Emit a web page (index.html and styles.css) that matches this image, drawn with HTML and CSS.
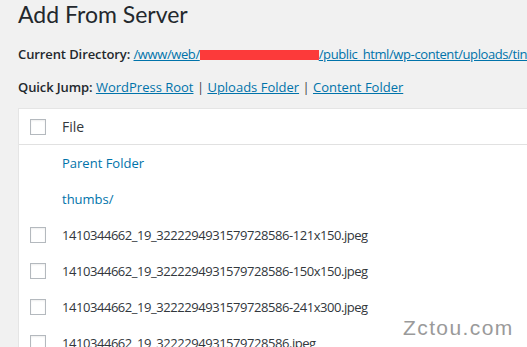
FILE: index.html
```html
<!DOCTYPE html>
<html lang="en">
<head>
    <meta charset="UTF-8">
    <title>Add From Server</title>
    <link rel="stylesheet" href="styles.css">
</head>
<body>
    <div class="wrap">
        <h1>Add From Server</h1>
        <p class="path-line"><strong>Current Directory:</strong> <a class="path" href="#">/www/web/<span class="redact"></span>/public_html/wp-content/uploads/tinymce</a></p>
        <p class="jump-line"><strong>Quick Jump:</strong> <a href="#">WordPress Root</a> | <a href="#">Uploads Folder</a> | <a href="#">Content Folder</a></p>

        <div class="files">
            <div class="row head">
                <span class="check"></span>
                <span class="name">File</span>
            </div>
            <div class="row">
                <span class="check blank"></span>
                <a class="name" href="#">Parent Folder</a>
            </div>
            <div class="row">
                <span class="check blank"></span>
                <a class="name" href="#">thumbs/</a>
            </div>
            <div class="row">
                <span class="check"></span>
                <span class="name file">1410344662_19_3222294931579728586-121x150.jpeg</span>
            </div>
            <div class="row">
                <span class="check"></span>
                <span class="name file">1410344662_19_3222294931579728586-150x150.jpeg</span>
            </div>
            <div class="row">
                <span class="check"></span>
                <span class="name file">1410344662_19_3222294931579728586-241x300.jpeg</span>
            </div>
            <div class="row">
                <span class="check"></span>
                <span class="name file">1410344662_19_3222294931579728586.jpeg</span>
            </div>
        </div>
    </div>
    <div class="watermark">Zctou.com</div>
</body>
</html>
```

FILE: styles.css
```css
html, body {
    overflow: hidden;
}
body {
    margin: 0;
    background: #f1f1f1;
    color: #444;
    font-family: 'Open Sans', 'Noto Sans', sans-serif;
    font-size: 13px;
    height: 347px;
}
.wrap {
    padding-left: 18px;
}
h1 {
    margin: 0;
    font-family: Lato, 'Open Sans', sans-serif;
    font-size: 23px;
    font-weight: 400;
    line-height: 29px;
    color: #23282d;
}
p {
    margin: 0;
    line-height: 19.5px;
    white-space: nowrap;
}
.path-line {
    margin-top: 16px;
}
.jump-line {
    margin-top: 13px;
}
strong {
    color: #23282d;
    font-weight: 600;
    letter-spacing: -0.1px;
}
a {
    color: #0073aa;
}
.path {
    letter-spacing: -0.4px;
}
.redact {
    display: inline-block;
    width: 119px;
    height: 10px;
    background: #fc3a3a;
    vertical-align: -1px;
}
.files {
    margin-top: 11px;
    width: 700px;
    background: #fff;
    border: 1px solid #e5e5e5;
}
.row {
    display: flex;
    align-items: center;
    height: 36px;
    padding-left: 11px;
    color: #32373c;
}
.row.head {
    height: 35px;
    border-bottom: 1px solid #e1e1e1;
    font-size: 14px;
}
.check {
    width: 14px;
    height: 14px;
    border: 1px solid #b4b9be;
    box-shadow: inset 0 1px 2px rgba(0, 0, 0, 0.07);
    flex: none;
}
.check.blank {
    border-color: transparent;
    box-shadow: none;
}
.name {
    margin-left: 16px;
    text-decoration: none;
    white-space: nowrap;
}
.name.file {
    letter-spacing: -0.45px;
}
.watermark {
    position: absolute;
    left: 403px;
    top: 316px;
    font-family: 'Liberation Sans', Arial, sans-serif;
    font-size: 21px;
    color: #9a9a9a;
    letter-spacing: 1.4px;
}
```
